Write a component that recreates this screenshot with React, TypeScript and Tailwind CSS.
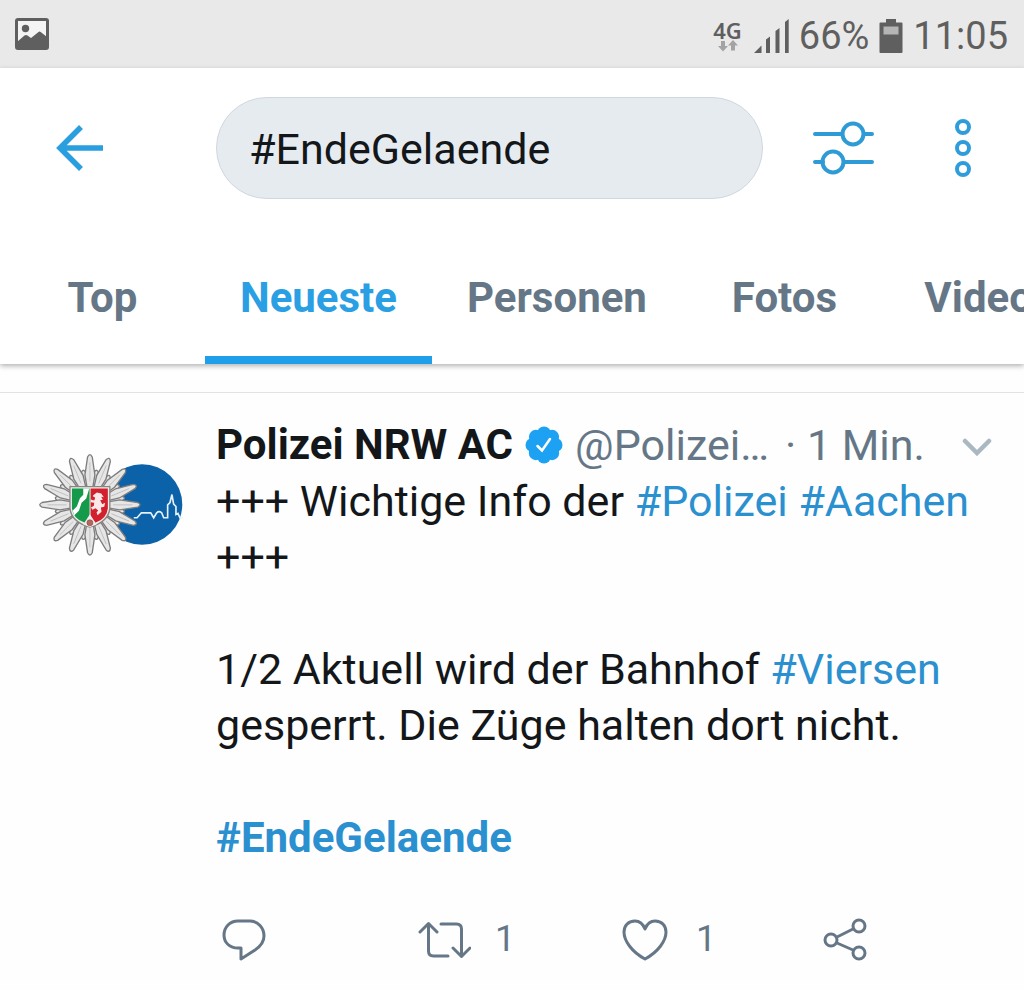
import { useState } from 'react'
import type { ReactNode } from 'react'

const TABS = ['Top', 'Neueste', 'Personen', 'Fotos', 'Videos']

const StatusBar = () => (
  <div className="flex h-17 items-center justify-between bg-[#e9e9e9] pr-4 pl-[15px] text-[#5f5f5f]">
    <svg viewBox="0 0 34 32" className="h-8 w-[34px]" aria-hidden="true">
      <rect x="1.5" y="1.5" width="31" height="29" rx="1.5" fill="#f4f4f4" />
      <path
        d="M2 24 9.5 17.5q1.5-1 3 0L16 20l7.500-6q1-1 2.200 0L32 19v12H2z"
        fill="currentColor"
      />
      <circle cx="10.500" cy="10.500" r="3.700" fill="currentColor" />
      <rect
        x="1.5"
        y="1.5"
        width="31"
        height="29"
        rx="1.5"
        fill="none"
        stroke="currentColor"
        strokeWidth="3"
      />
    </svg>
    <div className="flex items-center pt-1">
      <div className="flex flex-col items-center font-['Noto_Sans'] text-[22px] leading-5 font-semibold">
        4G
        <svg viewBox="0 0 20 12" className="h-3 w-5" fill="#a3a3a3" aria-hidden="true">
          <path d="M3 1h4v5h3l-5 5.500L0 6h3zM13 10.500h4v-5h3L15 0l-5 5.500h3z" />
        </svg>
      </div>
      <svg
        viewBox="0 0 35 34"
        className="ml-3 h-[34px] w-[35px]"
        fill="currentColor"
        aria-hidden="true"
      >
        <path d="M0 34 7.500 26.500V34zM12 20.500l4-3V34h-4zM21.500 12l4-3V34h-4zM31 3l3.700-3v34H31z" />
      </svg>
      <span className="ml-2.5 text-[38px] leading-10">66%</span>
      <svg viewBox="0 0 24 34" className="ml-2.5 h-[34px] w-6" aria-hidden="true">
        <path
          d="M7 0h10v3.500h5.500q1 0 1 1V33q0 1-1 1h-21q-1 0-1-1V4.500q0-1 1-1H7z"
          fill="currentColor"
        />
        <path d="M4.500 7.500h15v8h-15z" fill="#b5b5b5" />
      </svg>
      <span className="ml-2.5 text-[38px] leading-10">11:05</span>
    </div>
  </div>
)

const Toolbar = () => {
  const [query, setQuery] = useState('#EndeGelaende')

  return (
    <div className="flex h-40 items-center pr-13 pl-14 text-[#1da1f2]">
      <button type="button" aria-label="Zurück" className="shrink-0">
        <svg
          viewBox="0 0 48 46"
          className="h-[46px] w-12"
          fill="none"
          stroke="#2a9fe0"
          strokeWidth="5.500"
        >
          <path d="M47 23H5M25 2 4 23l21 21" />
        </svg>
      </button>
      <input
        type="search"
        aria-label="Suche"
        value={query}
        onChange={(e) => setQuery(e.target.value)}
        className="ml-28 h-[102px] min-w-0 flex-1 appearance-none rounded-full border border-[#d0d7e0] bg-[#e6ebf0] px-8 pt-0.5 text-[43px] text-[#14171a] outline-none"
      />
      <button type="button" aria-label="Filter" className="ml-12 shrink-0">
        <svg
          viewBox="0 0 63 54"
          className="h-[54px] w-[63px]"
          fill="none"
          stroke="#2f9bd6"
          strokeWidth="4"
          strokeLinecap="round"
        >
          <path d="M4 13h27M53 13h8M4 41h8M34 41h27" />
          <circle cx="42" cy="13" r="10.500" />
          <circle cx="22" cy="41" r="10.500" />
        </svg>
      </button>
      <button type="button" aria-label="Mehr" className="ml-20 shrink-0">
        <svg
          viewBox="0 0 18 60"
          className="h-15 w-[18px]"
          fill="none"
          stroke="#2f9dda"
          strokeWidth="4"
        >
          <circle cx="9" cy="9" r="6" />
          <circle cx="9" cy="30" r="6" />
          <circle cx="9" cy="51" r="6" />
        </svg>
      </button>
    </div>
  )
}

const Tabs = () => {
  const [active, setActive] = useState('Neueste')

  return (
    <nav className="flex h-34 overflow-hidden">
      {TABS.map((tab) => (
        <button
          key={tab}
          type="button"
          onClick={() => setActive(tab)}
          className={`min-w-[205px] shrink-0 border-b-8 px-[35px] pt-2.5 text-[42px] font-bold ${
            tab === active
              ? 'border-[#1f9fea] text-[#2a9fe3]'
              : 'border-transparent text-[#657786]'
          }`}
        >
          {tab}
        </button>
      ))}
    </nav>
  )
}

const LONG_RAYS = Array.from({ length: 16 }, (_, i) => i * 22.5)
const SHORT_RAYS = LONG_RAYS.map((angle) => angle + 11.25)

const Avatar = () => (
  <svg
    viewBox="24 24 436 310"
    className="h-[103px] w-[145px]"
    role="img"
    aria-label="Polizei NRW AC"
  >
    <circle cx="337" cy="179" r="121" fill="#0b62a9" />
    <path
      d="M312 219h10l13-15h28l9 15 9-15q7-7 15 0l6 15h12v-39l7-7 6-24 5 29 7 7v24l6-3 6 13h10"
      fill="none"
      stroke="#e6f1fa"
      strokeWidth="5"
    />
    <g fill="#e6e6e6" stroke="#7d7d7d" strokeWidth="4">
      {SHORT_RAYS.map((angle) => (
        <path
          key={angle}
          d="M180 180 169 105 174 80q6-12 12 0l5 25z"
          transform={`rotate(${angle} 180 180)`}
        />
      ))}
      {LONG_RAYS.map((angle) => (
        <path
          key={angle}
          d="M180 180 165 90 173 36q7-14 14 0l8 54z"
          transform={`rotate(${angle} 180 180)`}
        />
      ))}
    </g>
    <g fill="none" stroke="#b0b0b0" strokeWidth="2">
      {LONG_RAYS.map((angle) => (
        <path key={angle} d="M180 110V52" transform={`rotate(${angle} 180 180)`} />
      ))}
    </g>
    <path
      d="M120 125h120v65q-4 42-60 57-56-15-60-57z"
      fill="#eee"
      stroke="#8b8580"
      strokeWidth="4"
    />
    <path d="M126 131h53v83l-14 20q-36-12-39-44z" fill="#15994b" />
    <path
      d="M160 131h18l-9 30-14 13-8 24-14 13-5-13 13-14 9-24 10-10z"
      fill="#fff"
    />
    <path d="M182 131h52v59q-3 32-38 44l-14-20z" fill="#d3202d" />
    <path
      d="m190 151 11-8 13 3 8 11-8-1 5 9-8 1 6 12 9-4-3 12-10 2 2 13-12 10-3-8 5-6-8-7-9 5-5-7 9-5 1-9-11-2 1-8 10 3 3-8-7-5z"
      fill="#fbe9ea"
    />
    <path d="m180 208 20 31-20 8-20-8z" fill="#eee" />
    <circle cx="180" cy="234" r="9" fill="#b5665f" stroke="#8e4d48" strokeWidth="2" />
  </svg>
)

const VerifiedBadge = () => (
  <svg
    viewBox="0 0 38 38"
    className="ml-3 h-[38px] w-[38px] shrink-0"
    role="img"
    aria-label="Verifiziert"
  >
    <g fill="#1da1f2">
      <circle cx="19" cy="19" r="14" />
      {[0, 45, 90, 135, 180, 225, 270, 315].map((angle) => (
        <circle
          key={angle}
          cx="19"
          cy="7.500"
          r="7"
          transform={`rotate(${angle} 19 19)`}
        />
      ))}
    </g>
    <path
      d="m12.500 20 4.500 4.500 8-11.500"
      fill="none"
      stroke="#fff"
      strokeWidth="2.500"
      strokeLinecap="round"
    />
  </svg>
)

const Hashtag = ({ children }: { children: ReactNode }) => (
  <a href="#" className="text-[#2b90cf]">
    {children}
  </a>
)

const Action = ({
  label,
  count,
  children,
}: {
  label: string
  count?: number
  children: ReactNode
}) => (
  <button
    type="button"
    aria-label={label}
    className="flex h-12 min-w-[201px] items-center gap-6 text-4xl text-[#657786] last:min-w-0"
  >
    <svg
      viewBox="0 0 54 48"
      className="h-12 w-[54px] shrink-0"
      fill="none"
      stroke="currentColor"
      strokeWidth="3"
      strokeLinecap="round"
      strokeLinejoin="round"
    >
      {children}
    </svg>
    {count}
  </button>
)

const Tweet = () => (
  <article className="mt-7 flex border-t border-[#dfe3e6] pt-6 pr-8 pl-[38px]">
    <div className="w-[178px] shrink-0 pt-9">
      <Avatar />
    </div>
    <div className="min-w-0 flex-1">
      <header className="flex items-center text-[43px] leading-14 whitespace-nowrap text-[#657786]">
        <strong className="text-[42px] leading-14 font-bold text-[#14171a]">
          Polizei NRW AC
        </strong>
        <VerifiedBadge />
        <span className="ml-3">@Polizei…</span>
        <span className="ml-4">· 1 Min.</span>
        <button type="button" aria-label="Menü" className="ml-auto pt-1">
          <svg
            viewBox="0 0 30 18"
            className="h-[18px] w-[30px]"
            fill="none"
            stroke="#aab8c2"
            strokeWidth="4.500"
            strokeLinecap="round"
          >
            <path d="m3 3 12 12L27 3" />
          </svg>
        </button>
      </header>
      <p className="text-[43px] leading-14 text-[#14171a]">
        +++ Wichtige Info der <Hashtag>#Polizei</Hashtag> <Hashtag>#Aachen</Hashtag> +++
        <br />
        <br />
        1/2 Aktuell wird der Bahnhof <Hashtag>#Viersen</Hashtag> gesperrt. Die Züge
        halten dort nicht.
        <br />
        <br />
        <strong className="text-[42px] font-bold">
          <Hashtag>#EndeGelaende</Hashtag>
        </strong>
      </p>
      <div className="mt-12 flex pt-px">
        <Action label="Antworten">
          <path d="M22 6h12c8 0 14 7 14 15 0 6-3 10-9 14L25 44V33h-3C14 33 8 28 8 20S14 6 22 6Z" />
        </Action>
        <Action label="Retweeten" count={1}>
          <path d="m3 17 8.500-8.500L20 17M11.500 9v27q0 5 5 5H31M24 9h15.500q5 0 5 5v27M36 33l8.500 8.500L53 33" />
        </Action>
        <Action label="Gefällt mir" count={1}>
          <path d="M27 14C25 9 21 6 17 6 10 6 6 11 6 17c0 9 8 20 21 27 13-7 21-18 21-27 0-6-4-11-11-11-4 0-8 3-10 8Z" />
        </Action>
        <Action label="Teilen">
          <circle cx="12" cy="25" r="6" />
          <circle cx="40" cy="11" r="6" />
          <circle cx="40" cy="38" r="6" />
          <path d="m18 22 16-8M18 28l16 7" />
        </Action>
      </div>
    </div>
  </article>
)

export default function App() {
  return (
    <div className="min-h-screen overflow-x-hidden bg-[#fefefe] font-[Roboto,sans-serif]">
      <StatusBar />
      <header className="bg-white shadow-[0_2px_5px_rgba(0,0,0,0.3)]">
        <Toolbar />
        <Tabs />
      </header>
      <main>
        <Tweet />
      </main>
    </div>
  )
}
